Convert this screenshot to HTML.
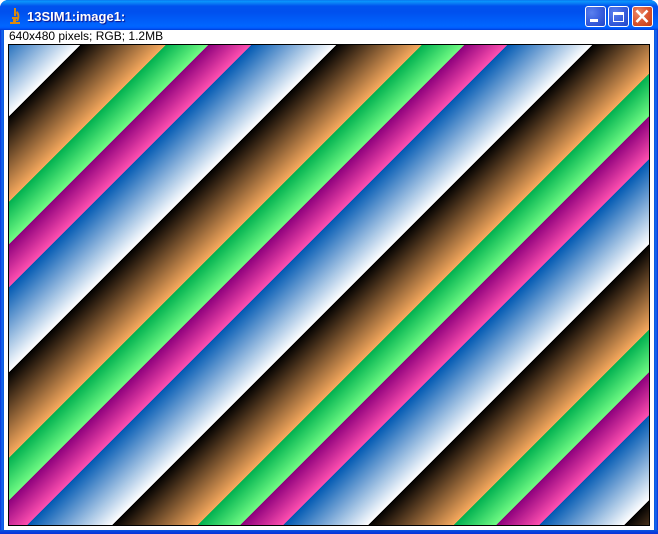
<!DOCTYPE html>
<html><head><meta charset="utf-8"><style>
html,body{margin:0;padding:0;background:#fff}
body{width:658px;height:534px;overflow:hidden;position:relative;font-family:"Liberation Sans",sans-serif}
#win{position:absolute;left:0;top:0;width:658px;height:534px;background:#0a3fe0;border-radius:8px 8px 0 0;overflow:hidden}
#title{position:absolute;left:0;top:0;width:658px;height:30px;background:linear-gradient(180deg,#0a6ae8 0,#0997ff 1px,#0a80f5 3px,#0053ee 6px,#0050ee 12px,#0066ff 26px,#005bff 28px,#003dd7 30px)}
#l{position:absolute;left:0;top:30px;width:4px;height:504px;background:linear-gradient(90deg,#0831d9,#166aee 50%,#0855dd)}
#r{position:absolute;right:0;top:30px;width:4px;height:504px;background:linear-gradient(270deg,#0831d9,#166aee 50%,#0855dd)}
#b{position:absolute;left:0;top:530px;width:658px;height:4px;background:linear-gradient(180deg,#0855dd,#0840dd 50%,#0831d9)}
#client{position:absolute;left:4px;top:30px;width:650px;height:500px;background:#fff}
#cap{position:absolute;left:9px;top:29px;font-size:12px;line-height:14px;color:#000;white-space:nowrap}
#tt{position:absolute;left:27px;top:9px;font-size:13px;line-height:16px;font-weight:bold;color:#fff;text-shadow:1px 1px 1px #0f1089;white-space:nowrap}
#frame{position:absolute;left:8px;top:44px;width:640px;height:480px;border:1px solid #000;overflow:hidden;background:#000}
#grad{position:absolute;left:-14px;top:0;width:654px;height:480px;background:repeating-linear-gradient(135deg,
 #0058b2 0,#ffffff 60.34px,
 #000000 60.34px,#f8aa5e 120.68px,
 #00b050 120.68px,#72fc84 150.85px,
 #8c007c 150.85px,#ff50b0 181.02px)}
.btn{position:absolute;top:6px;width:19px;height:19px;border:1px solid #fff;border-radius:3px;box-sizing:content-box}
.blue{background:radial-gradient(circle at 30% 30%,#5a80ee 0,#3c62e0 45%,#1f45c8 100%)}
.red{background:radial-gradient(circle at 30% 30%,#ec8a6a 0,#dd5a35 45%,#c23a14 100%)}
</style></head><body>
<div id="win">
<div id="title"></div>
<div id="l"></div><div id="r"></div><div id="b"></div>
<div id="client"></div>
<svg style="position:absolute;left:9px;top:7px" width="12" height="17" viewBox="0 0 12 17"><path d="M5 1h2v8H5z M1 15h10v2H1z M3 10h7v2H3z M4 12h3v3H4z M8 4c3 2 3 7 1 10H7c2-3 2-6 0-8z" fill="#d98a10"/></svg>
<div id="tt">13SIM1:image1:</div>
<div class="btn blue" style="left:585px"><div style="position:absolute;left:4px;top:12px;width:8px;height:3px;background:#fff"></div></div>
<div class="btn blue" style="left:608px"><div style="position:absolute;left:4px;top:5px;width:9px;height:6px;border:1px solid #fff;border-top:3px solid #fff"></div></div>
<div class="btn red" style="left:632px"><svg width="19" height="19" style="position:absolute;left:0;top:0"><path d="M3.5 3.5L14.5 15M14.5 3.5L3.5 15" stroke="#fff" stroke-width="2.6" fill="none"/></svg></div>
<div id="cap">640x480 pixels; RGB; 1.2MB</div>
<div id="frame"><div id="grad"></div></div>
</div>
</body></html>
